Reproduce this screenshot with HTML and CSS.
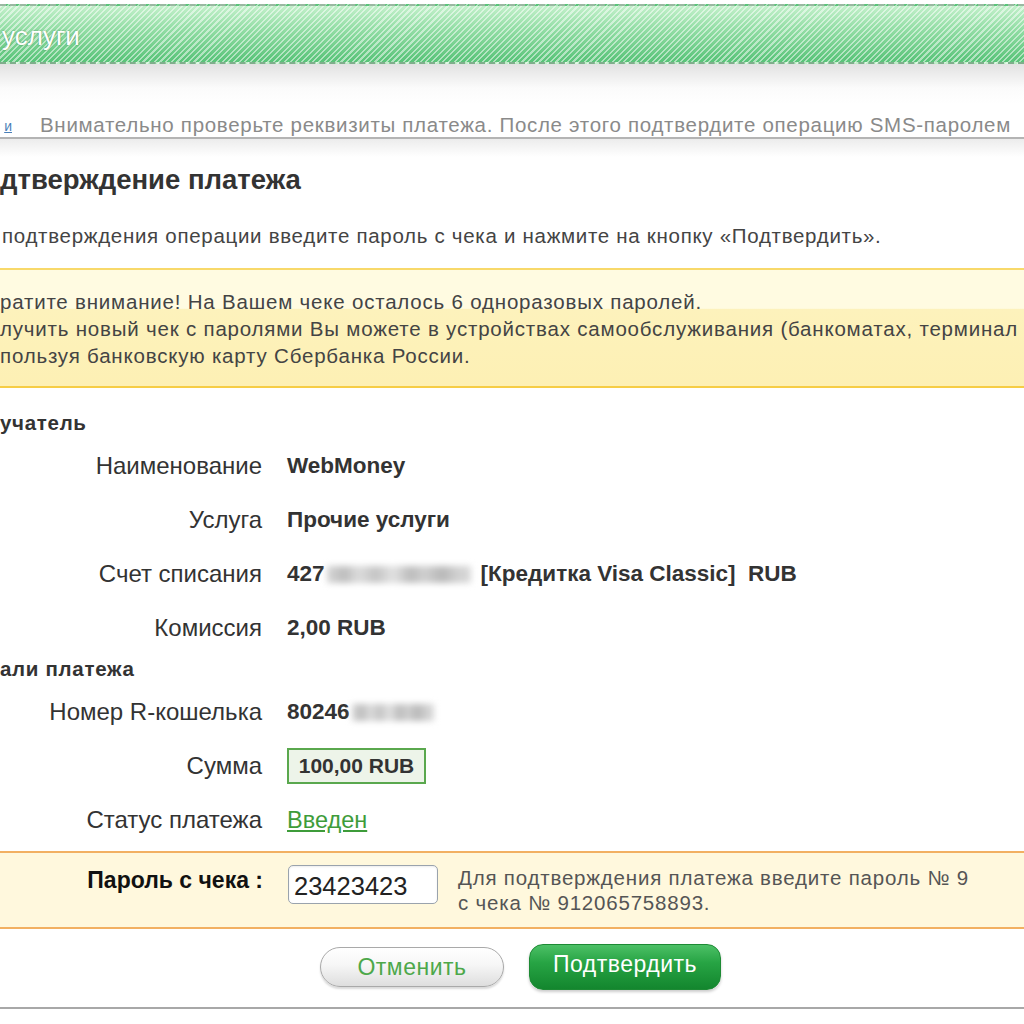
FILE: index.html
```html
<!DOCTYPE html>
<html lang="ru">
<head>
<meta charset="utf-8">
<title>Подтверждение платежа</title>
<link rel="stylesheet" href="styles.css">
</head>
<body>
<div class="page">
  <header class="topbar">
    <span class="topbar-title">услуги</span>
  </header>
  <div class="topshade"></div>
  <div class="notice-row">
    <a class="crumb" href="#">и</a>
    <span class="notice-text">Внимательно проверьте реквизиты платежа. После этого подтвердите операцию SMS-паролем</span>
  </div>
  <main class="panel">
    <h1 class="title">дтверждение платежа</h1>
    <p class="intro">подтверждения операции введите пароль с чека и нажмите на кнопку «Подтвердить».</p>
    <div class="warning">
      <p>ратите внимание! На Вашем чеке осталось 6 одноразовых паролей.</p>
      <p>лучить новый чек с паролями Вы можете в устройствах самообслуживания (банкоматах, терминал</p>
      <p>пользуя банковскую карту Сбербанка России.</p>
    </div>

    <h2 class="section section-first">учатель</h2>
    <div class="fields">
      <div class="label">Наименование</div>
      <div class="value">WebMoney</div>
      <div class="label">Услуга</div>
      <div class="value">Прочие услуги</div>
      <div class="label">Счет списания</div>
      <div class="value">427<span class="smudge smudge-wide" aria-hidden="true"></span>[Кредитка Visa Classic]&nbsp; RUB</div>
      <div class="label">Комиссия</div>
      <div class="value">2,00 RUB</div>
    </div>

    <h2 class="section section-second">али платежа</h2>
    <div class="fields">
      <div class="label">Номер R-кошелька</div>
      <div class="value">80246<span class="smudge smudge-short" aria-hidden="true"></span></div>
      <div class="label">Сумма</div>
      <div class="value"><span class="amount">100,00 RUB</span></div>
      <div class="label">Статус платежа</div>
      <div class="value"><a class="status" href="#">Введен</a></div>
    </div>

    <div class="password">
      <div class="pw-label">Пароль с чека :</div>
      <input class="pw-input" type="text" value="23423423">
      <div class="pw-help">Для подтверждения платежа введите пароль № 9<br>с чека № 912065758893.</div>
    </div>

    <div class="actions">
      <button class="btn btn-cancel" type="button">Отменить</button>
      <button class="btn btn-confirm" type="button">Подтвердить</button>
    </div>
  </main>
</div>
</body>
</html>
```
FILE: styles.css
```css
html, body {
  margin: 0;
  padding: 0;
  background: #fff;
  overflow: hidden;
}

body {
  font-family: "Liberation Sans", Arial, sans-serif;
  color: #333;
}

.page {
  width: 1024px;
}

.topbar {
  margin-top: 4px;
  height: 56px;
  border-top: 2px dashed #9ab8a2;
  border-bottom: 2px dashed #7fae8c;
  background:
    repeating-linear-gradient(135deg, rgba(255,255,255,0.5) 0 1.5px, rgba(255,255,255,0) 1.5px 4px),
    linear-gradient(#c2f0ca 0%, #94dea6 40%, #58c378 100%);
  display: flex;
  align-items: center;
}

.topbar-title {
  padding-left: 2px;
  font-size: 26px;
  color: #fff;
  text-shadow: 0 0 2px rgba(50,110,60,0.7);
  margin-top: 4px;
}

.topshade {
  height: 40px;
  background: linear-gradient(#e2e2e2, #fbfbfb 60%, #fff);
}

.notice-row {
  height: 33px;
  display: flex;
  align-items: flex-end;
  gap: 28px;
  border-bottom: 2px solid #b4b4b4;
  white-space: nowrap;
}

.crumb {
  font-size: 14px;
  color: #4a7fb8;
  text-decoration: underline;
  margin-bottom: 3px;
  width: 12px;
  text-align: right;
}

.notice-text {
  font-size: 20.5px;
  letter-spacing: 0.7px;
  color: #8a8a8a;
  text-shadow: 0 1px 0 #fff;
  line-height: 24px;
}

.panel {
  background: linear-gradient(#ececec, #fff 18px);
  padding-top: 25px;
  padding-bottom: 17px;
  border-bottom: 2px solid #a8a8a8;
  box-shadow: 0 6px 8px -2px rgba(0,0,0,0.12);
}

.title {
  margin: 0;
  font-size: 27.5px;
  font-weight: bold;
  color: #333;
  line-height: 32px;
}

.intro {
  margin: 28px 0 0 2px;
  font-size: 20.5px;
  letter-spacing: 0.7px;
  color: #444;
  line-height: 24px;
  white-space: nowrap;
}

.warning {
  margin-top: 20px;
  padding: 17.5px 0;
  border-top: 2px solid #f8d96a;
  border-bottom: 2px solid #f6cd45;
  background: linear-gradient(#fffbe1 0%, #fffbe1 33%, #fdf2bc 34%, #fdf0b4 100%);
  white-space: nowrap;
}

.warning p {
  margin: 0;
  font-size: 20.5px;
  letter-spacing: 0.8px;
  line-height: 27px;
  color: #444;
}

.section {
  margin: 0;
  font-size: 20.5px;
  letter-spacing: 0.7px;
  font-weight: bold;
  color: #333;
  line-height: 24px;
}

.section-first {
  margin-top: 23px;
}

.section-second {
  margin-top: 2px;
}

.fields {
  display: grid;
  grid-template-columns: 262px 1fr;
  column-gap: 25px;
  grid-auto-rows: 54px;
  align-items: center;
  margin-top: 4px;
}

.label {
  text-align: right;
  font-size: 24px;
  color: #333;
}

.value {
  font-size: 22.5px;
  font-weight: bold;
  color: #333;
  white-space: nowrap;
  display: flex;
  align-items: center;
}

.smudge {
  display: inline-block;
  height: 17px;
  margin: 0 10px 0 2px;
  filter: blur(3px);
  background:
    linear-gradient(90deg,
      #d6d6d6 0%, #bdbdbd 12%, #dcdcdc 22%, #c4c4c4 34%, #e2e2e2 46%,
      #bcbcbc 58%, #d0d0d0 68%, #b8b8b8 80%, #cfcfcf 90%, #dadada 100%);
}

.smudge-wide {
  width: 144px;
}

.smudge-short {
  width: 82px;
}

.amount {
  display: inline-block;
  box-sizing: border-box;
  width: 139px;
  height: 36px;
  line-height: 32px;
  text-align: center;
  border: 2px solid #5aa84e;
  background: #edf4e9;
  font-size: 21px;
}

.status {
  font-weight: normal;
  font-size: 23.5px;
  color: #3e9c3a;
  text-decoration: underline;
}

.password {
  margin-top: 4px;
  padding: 12px 0;
  border-top: 2px solid #f2b062;
  border-bottom: 2px solid #f2b062;
  background: #fff8dd;
  display: grid;
  grid-template-columns: 263px 150px 1fr;
  column-gap: 25px;
  align-items: start;
}

.pw-label {
  text-align: right;
  font-size: 23px;
  font-weight: bold;
  color: #111;
  padding-top: 2px;
}

.pw-input {
  box-sizing: border-box;
  width: 150px;
  height: 39px;
  border: 1px solid #9aa3ad;
  border-radius: 5px;
  background: #fff;
  font-family: "Liberation Sans", Arial, sans-serif;
  font-size: 25.5px;
  color: #222;
  padding: 4px 5px 0;
  box-shadow: inset 0 1px 2px rgba(0,0,0,0.08);
}

.pw-help {
  font-size: 20.5px;
  letter-spacing: 0.8px;
  line-height: 25px;
  color: #555;
  margin-left: -5px;
}

.actions {
  display: flex;
  gap: 25px;
  padding-left: 320px;
  margin-top: 15px;
  align-items: center;
}

.btn {
  font-family: "Liberation Sans", Arial, sans-serif;
  font-size: 23px;
  letter-spacing: 0.5px;
  cursor: pointer;
}

.btn-cancel {
  width: 184px;
  height: 40px;
  border-radius: 20px;
  border: 1px solid #a9a9a9;
  background: linear-gradient(#ffffff 0%, #f6f6f6 45%, #dedede 100%);
  color: #4da84a;
  box-shadow: 0 2px 2px rgba(0,0,0,0.15);
}

.btn-confirm {
  width: 192px;
  height: 46px;
  border-radius: 14px;
  border: 1px solid #1d8a34;
  background: linear-gradient(#4cc066 0%, #27a444 40%, #13862e 100%);
  color: #fff;
  box-shadow: 0 2px 3px rgba(0,0,0,0.2);
  padding-bottom: 6px;
}
```
